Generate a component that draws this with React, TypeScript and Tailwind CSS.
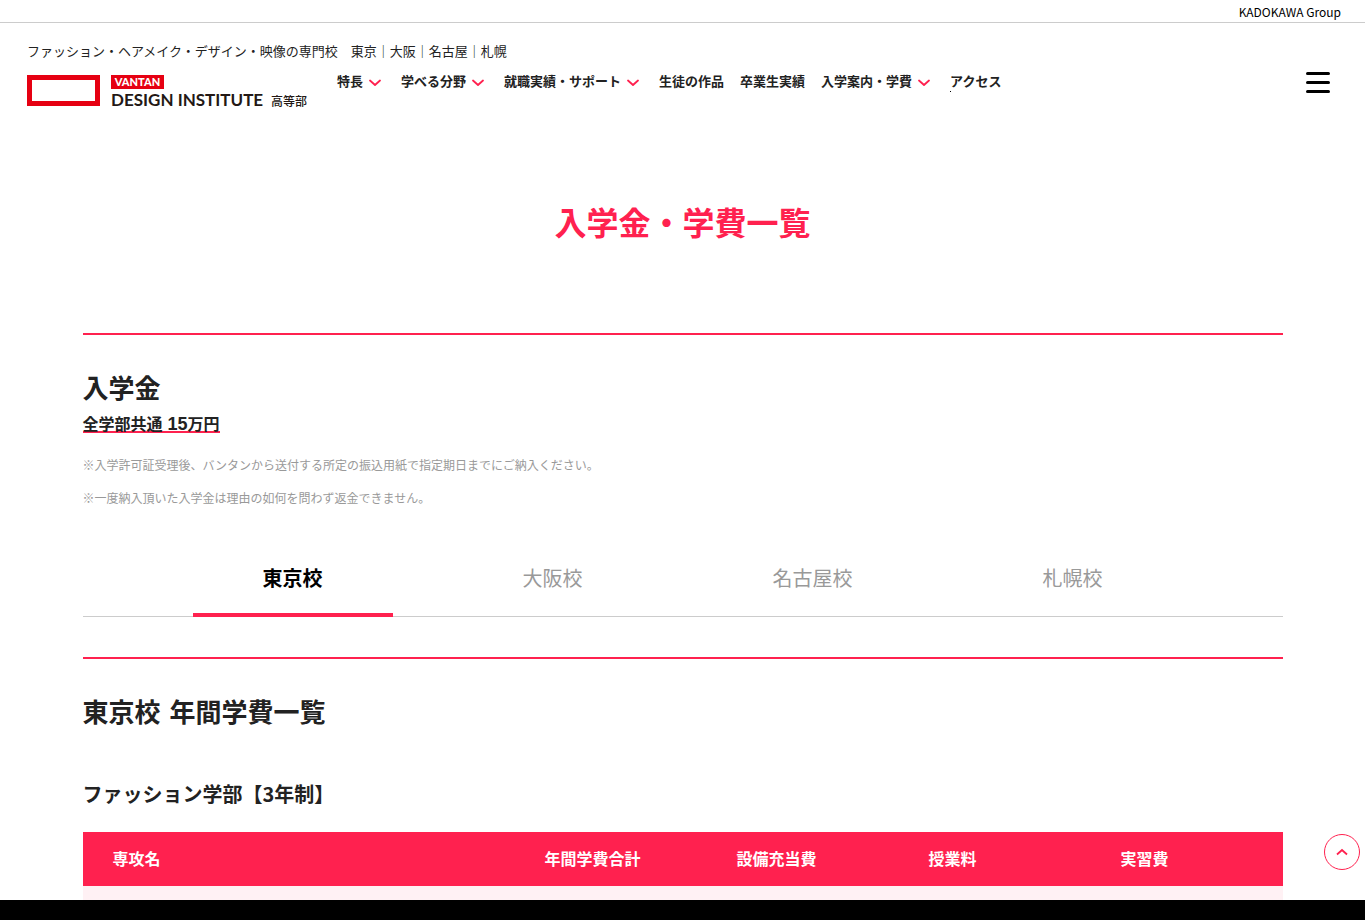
import React, { useState } from "react";

type NavItem = { label: string; menu?: boolean; marker?: boolean };

const navItems: NavItem[] = [
  { label: "特長", menu: true },
  { label: "学べる分野", menu: true },
  { label: "就職実績・サポート", menu: true },
  { label: "生徒の作品" },
  { label: "卒業生実績" },
  { label: "入学案内・学費", menu: true },
  { label: "アクセス", marker: true },
];

const schools = ["東京校", "大阪校", "名古屋校", "札幌校"];

const notes = [
  "※入学許可証受理後、バンタンから送付する所定の振込用紙で指定期日までにご納入ください。",
  "※一度納入頂いた入学金は理由の如何を問わず返金できません。",
];

const feeColumns = ["年間学費合計", "設備充当費", "授業料", "実習費"];

function ChevronDown() {
  return (
    <svg className="mt-1 h-2 w-3" viewBox="0 0 12 8" fill="none" aria-hidden="true">
      <path d="M1 1.5 L6 6 L11 1.5" stroke="#ff214f" strokeWidth="1.8" strokeLinecap="round" strokeLinejoin="round" />
    </svg>
  );
}

function Logo() {
  return (
    <a href="#" className="flex w-[280px] shrink-0 items-center gap-[11px] text-[#231815]" aria-label="VANTAN DESIGN INSTITUTE 高等部">
      <span className="h-[31px] w-[73px] shrink-0 border-5 border-[#e60012]" />
      <span className="flex h-[31px] flex-1 flex-col">
        <span className="flex h-[14px] w-[53px] items-center justify-center bg-[#e60012] font-['Lato','Noto_Sans_CJK_JP',sans-serif] text-[11px] leading-[14px] font-black text-white">
          VANTAN
        </span>
        <span className="flex items-baseline justify-between whitespace-nowrap">
          <span className="font-['Lato','Noto_Sans_CJK_JP',sans-serif] text-[17px] leading-[22px] font-bold">DESIGN INSTITUTE</span>
          <span className="text-[12px] leading-[22px] font-medium">高等部</span>
        </span>
      </span>
    </a>
  );
}

function Header() {
  return (
    <header className="shrink-0">
      <div className="flex h-[23px] items-center justify-end border-b border-[#ccc] px-6 pt-0.5">
        <a href="#" className="text-[12px] leading-5 text-black">
          KADOKAWA Group
        </a>
      </div>
      <div className="flex items-center justify-between pt-[18px] pr-[35px] pl-[27px]">
        <div>
          <p className="text-[13px] leading-5">ファッション・ヘアメイク・デザイン・映像の専門校　東京｜大阪｜名古屋｜札幌</p>
          <div className="mt-[14px] flex items-start gap-[30px]">
            <Logo />
            <nav aria-label="メインメニュー">
              <ul className="flex gap-4 text-[13px] leading-3 font-bold whitespace-nowrap">
                {navItems.map((item) => (
                  <li key={item.label} className={item.menu ? "pr-1" : "relative"}>
                    <a href="#" className="flex items-center gap-1.5">
                      {item.label}
                      {item.menu && <ChevronDown />}
                    </a>
                    {item.marker && <span className="absolute top-4 left-0 size-px bg-black" />}
                  </li>
                ))}
              </ul>
            </nav>
          </div>
        </div>
        <button type="button" aria-label="メニュー" className="mt-[18px] flex w-6 flex-col gap-1.5">
          <span className="h-[3px] w-full rounded-full bg-black" />
          <span className="h-[3px] w-full rounded-full bg-black" />
          <span className="h-[3px] w-full rounded-full bg-black" />
        </button>
      </div>
    </header>
  );
}

function SchoolTabs() {
  const [selected, setSelected] = useState(0);
  return (
    <div role="tablist" className="mt-[34px] flex justify-center gap-[60px] border-b border-[#ccc]">
      {schools.map((school, index) => (
        <button
          key={school}
          type="button"
          role="tab"
          aria-selected={index === selected}
          onClick={() => setSelected(index)}
          className={
            index === selected
              ? "-mb-px w-[200px] border-b-4 border-[#ff214f] pt-[22px] pb-[20px] text-[20px] leading-[30px] font-bold text-black"
              : "-mb-px w-[200px] border-b-4 border-transparent pt-[22px] pb-[20px] text-[20px] leading-[30px] text-[#999]"
          }
        >
          {school}
        </button>
      ))}
    </div>
  );
}

function FeeTable() {
  return (
    <table className="mt-[23px] w-full table-fixed border-collapse text-left text-[16px] leading-6">
      <thead className="bg-[#ff214f] text-white">
        <tr>
          <th scope="col" className="w-[36%] pt-[14px] pb-4 pl-[30px] font-bold">専攻名</th>
          {feeColumns.map((column) => (
            <th key={column} scope="col" className="w-[16%] pt-[14px] pb-4 pl-[30px] font-bold">{column}</th>
          ))}
        </tr>
      </thead>
      <tbody>
        <tr className="h-14 bg-[#fff1f4]">
          <td colSpan={5} />
        </tr>
      </tbody>
    </table>
  );
}

export default function App() {
  return (
    <div className="flex h-screen flex-col bg-white font-['Noto_Sans_CJK_JP',sans-serif] text-[#222]">
      <Header />
      <main className="min-h-0 flex-1 overflow-hidden px-6">
        <h1 className="mt-[91px] text-center text-[32px] leading-12 font-bold text-[#ff214f]">入学金・学費一覧</h1>
        <div className="mx-auto mt-[88px] max-w-[1200px]">
          <section className="border-t-2 border-[#ff214f] pt-8">
            <h2 className="text-[26px] leading-10 font-bold">入学金</h2>
            <p className="mt-2 flex">
              <span className="flex h-[18px] items-baseline border-b-2 border-[#ff214f] text-[16px] leading-4 font-bold">
                <span className="mr-[5px]">全学部共通</span>
                <span className="font-['Liberation_Sans',sans-serif] text-[18px]">15</span>
                <span>万円</span>
              </span>
            </p>
            <div className="mt-[23px] flex flex-col gap-[15px] text-[12px] leading-[18px] text-[#999]">
              {notes.map((note) => (
                <p key={note}>{note}</p>
              ))}
            </div>
          </section>
          <SchoolTabs />
          <section className="mt-10 border-t-2 border-[#ff214f] pt-8">
            <h2 className="flex gap-[9px] text-[26px] leading-10 font-bold">
              <span>東京校</span>
              <span>年間学費一覧</span>
            </h2>
            <h3 className="mt-12 text-[20px] leading-[30px] font-bold">ファッション学部【3年制】</h3>
            <FeeTable />
          </section>
        </div>
      </main>
      <a
        href="#"
        aria-label="ページの先頭へ"
        className="fixed right-[5px] bottom-[50px] flex size-9 items-center justify-center rounded-full border border-[#ff214f] bg-white"
      >
        <svg className="h-2 w-3" viewBox="0 0 12 8" fill="none" aria-hidden="true">
          <path d="M1 6.5 L6 2 L11 6.5" stroke="#ff214f" strokeWidth="1.8" />
        </svg>
      </a>
      <footer className="h-5 shrink-0 bg-black" />
    </div>
  );
}
